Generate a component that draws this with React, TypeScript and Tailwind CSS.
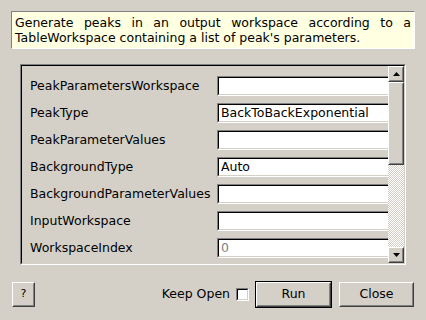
import React from "react";

const rows: { label: string; value: string; gray?: boolean }[] = [
  { label: "PeakParametersWorkspace", value: "" },
  { label: "PeakType", value: "BackToBackExponential" },
  { label: "PeakParameterValues", value: "" },
  { label: "BackgroundType", value: "Auto" },
  { label: "BackgroundParameterValues", value: "" },
  { label: "InputWorkspace", value: "" },
  { label: "WorkspaceIndex", value: "0", gray: true },
];

function Raised({ children, className = "" }: { children?: React.ReactNode; className?: string }) {
  return (
    <div className={"border border-t-white border-l-white border-b-[#404040] border-r-[#404040] bg-[#d4d0c8] " + className}>
      <div className="w-full h-full border border-t-[#d4d0c8] border-l-[#d4d0c8] border-b-[#808080] border-r-[#808080] flex items-center justify-center">
        {children}
      </div>
    </div>
  );
}

export default function App() {
  return (
    <div
      className="w-[426px] h-[320px] bg-[#d4d0c8] flex flex-col text-[12.5px] text-black overflow-hidden"
      style={{ fontFamily: '"DejaVu Sans", sans-serif' }}
    >
      <div className="mx-[11px] mt-[11px] h-[38px] bg-[#ffffe1] border border-t-[#808080] border-l-[#808080] border-b-white border-r-white px-[3px] pt-[3px] leading-[15px] text-justify [text-align-last:left]">
        Generate peaks in an output workspace according to a TableWorkspace containing a list of peak's parameters.
      </div>

      <div className="ml-[20px] w-[386px] mt-[15px] h-[201px] border border-t-[#808080] border-l-[#808080] border-b-white border-r-white">
        <div className="w-full h-full border border-t-black border-l-black border-b-[#d4d0c8] border-r-[#d4d0c8] flex">
          <div className="flex-1 overflow-hidden pl-[8px] pt-[10px] flex flex-col gap-[7px]">
            {rows.map((r) => (
              <div key={r.label} className="flex items-center h-[20px] shrink-0">
                <div className="w-[187px] shrink-0 whitespace-nowrap">{r.label}</div>
                <div className="w-[190px] shrink-0 h-[20px] border border-t-[#808080] border-l-[#808080] border-b-white border-r-white">
                  <div className="w-full h-full bg-white border border-t-black border-l-black border-b-[#d4d0c8] border-r-[#d4d0c8] flex items-center pl-[2px] whitespace-nowrap">
                    <span className={r.gray ? "text-[#808080]" : ""}>{r.value}</span>
                  </div>
                </div>
              </div>
            ))}
          </div>
          <div className="w-[16px] shrink-0 flex flex-col">
            <Raised className="h-[16px] w-[16px] shrink-0">
              <svg width="7" height="4" viewBox="0 0 7 4">
                <polygon points="3.5,0 7,4 0,4" fill="black" />
              </svg>
            </Raised>
            <Raised className="h-[83px] w-[16px] shrink-0" />
            <div className="flex-1 bg-[repeating-conic-gradient(#ffffff_0_25%,#d4d0c8_0_50%)] bg-[length:2px_2px]" />
            <Raised className="h-[16px] w-[16px] shrink-0">
              <svg width="7" height="4" viewBox="0 0 7 4">
                <polygon points="0,0 7,0 3.5,4" fill="black" />
              </svg>
            </Raised>
          </div>
        </div>
      </div>

      <div className="mt-[16px] h-[27px] flex items-center pl-[12px]">
        <Raised className="w-[23px] h-[25px] text-[11px]">?</Raised>
        <div className="flex-1" />
        <span className="mr-[6px]">Keep Open</span>
        <div className="w-[13px] h-[13px] border border-t-[#808080] border-l-[#808080] border-b-white border-r-white">
          <div className="w-full h-full bg-white border border-t-black border-l-black border-b-[#d4d0c8] border-r-[#d4d0c8]" />
        </div>
        <div className="ml-[6px] w-[77px] h-[27px] border border-black">
          <Raised className="w-full h-full">Run</Raised>
        </div>
        <Raised className="ml-[7px] w-[75px] h-[25px] mr-[12px]">Close</Raised>
      </div>
    </div>
  );
}
